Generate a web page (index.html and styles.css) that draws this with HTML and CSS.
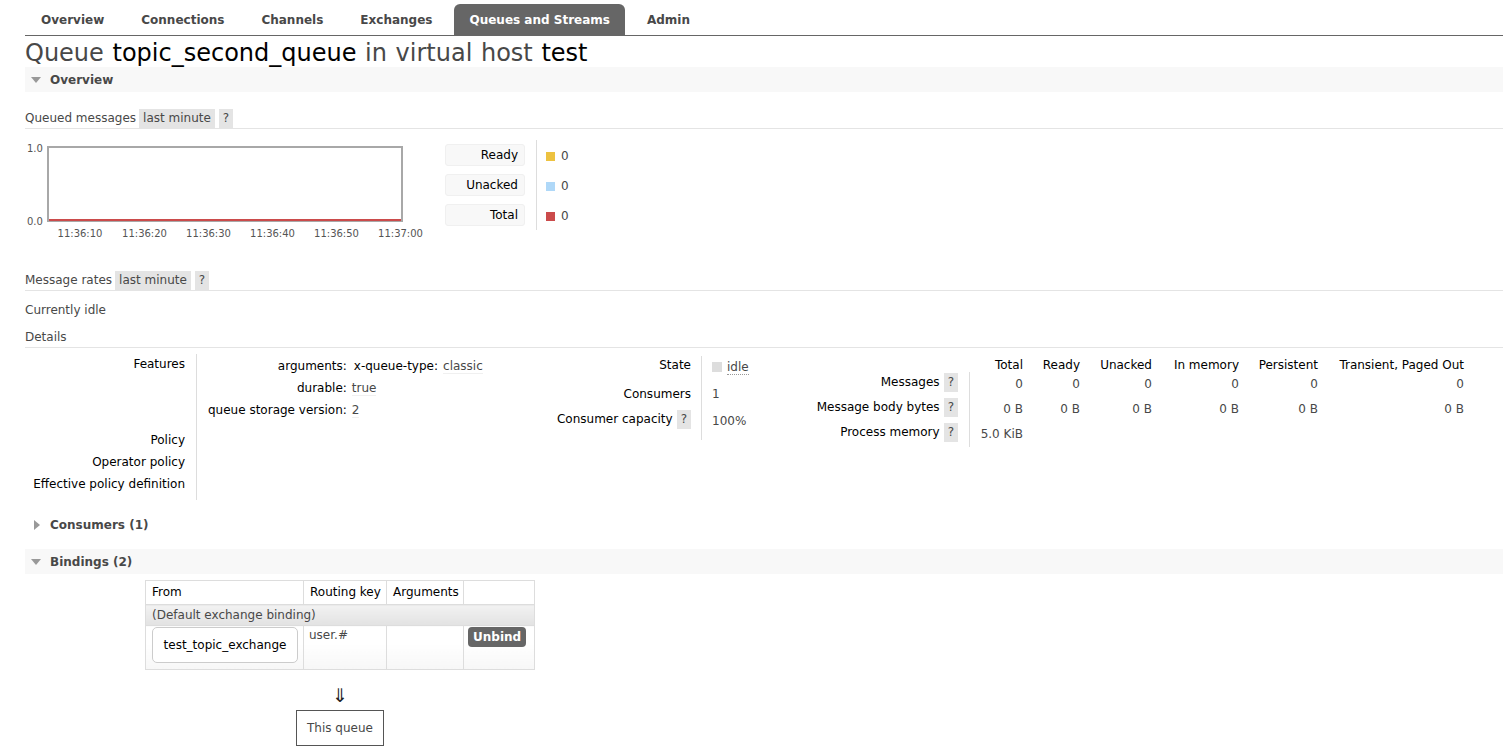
FILE: index.html
```html
<!DOCTYPE html>
<html>
<head>
    <title>RabbitMQ Management</title>
    <link rel="stylesheet" href="styles.css">
</head>
<body>
<div id="menu">
    <ul class="tabs">
        <li><a href="#">Overview</a></li>
        <li><a href="#">Connections</a></li>
        <li><a href="#">Channels</a></li>
        <li><a href="#">Exchanges</a></li>
        <li class="selected"><a href="#">Queues and Streams</a></li>
        <li><a href="#">Admin</a></li>
    </ul>
</div>

<div id="main">
    <h1>Queue <b>topic_second_queue</b> in virtual host <b>test</b></h1>

    <div class="section">
        <h2 class="section-title open"><span class="arrow"></span>Overview</h2>
        <div class="hider">
            <h3 class="rate-head">Queued messages <span class="popup-options">last minute</span><span class="help">?</span></h3>
            <div class="box">
                <svg class="chart" width="400" height="100" viewBox="0 0 400 100">
                    <rect x="23" y="7" width="354" height="74" fill="#fff" stroke="#a8a8a8" stroke-width="2"/>
                    <line x1="24" y1="80" x2="376" y2="80" stroke="#cb4b4b" stroke-width="2"/>
                    <text x="2" y="12">1.0</text>
                    <text x="2" y="85">0.0</text>
                    <g text-anchor="middle">
                        <text x="55" y="97">11:36:10</text>
                        <text x="119.5" y="97">11:36:20</text>
                        <text x="183.5" y="97">11:36:30</text>
                        <text x="247.5" y="97">11:36:40</text>
                        <text x="311.5" y="97">11:36:50</text>
                        <text x="375.5" y="97">11:37:00</text>
                    </g>
                </svg>
                <div class="legend">
                    <div class="legend-labels">
                        <span>Ready</span>
                        <span>Unacked</span>
                        <span>Total</span>
                    </div>
                    <div class="legend-values">
                        <span><i class="swatch ready"></i>0</span>
                        <span><i class="swatch unacked"></i>0</span>
                        <span><i class="swatch total"></i>0</span>
                    </div>
                </div>
            </div>

            <h3 class="rate-head rates">Message rates <span class="popup-options">last minute</span><span class="help">?</span></h3>
            <p class="idle">Currently idle</p>

            <h3>Details</h3>
            <div class="details">
                <table class="facts facts-features">
                    <tr>
                        <th>Features</th>
                        <td class="feat">
                            <table class="mini">
                                <tr>
                                    <th>arguments:</th>
                                    <td>
                                        <table class="mini args">
                                            <tr><th>x-queue-type:</th><td><abbr>classic</abbr></td></tr>
                                        </table>
                                    </td>
                                </tr>
                                <tr><th>durable:</th><td><abbr>true</abbr></td></tr>
                                <tr><th>queue storage version:</th><td><abbr>2</abbr></td></tr>
                            </table>
                        </td>
                    </tr>
                    <tr><th>Policy</th><td></td></tr>
                    <tr><th>Operator policy</th><td></td></tr>
                    <tr class="last"><th>Effective policy definition</th><td></td></tr>
                </table>

                <table class="facts facts-state">
                    <tr class="state">
                        <th>State</th>
                        <td><i class="state-box"></i><abbr class="state-idle">idle</abbr></td>
                    </tr>
                    <tr class="consumers">
                        <th>Consumers</th>
                        <td>1</td>
                    </tr>
                    <tr class="capacity">
                        <th><span class="with-help">Consumer capacity <span class="help">?</span></span></th>
                        <td>100%</td>
                    </tr>
                </table>

                <table class="facts facts-msgs">
                    <tr class="head">
                        <th></th>
                        <td class="c1">Total</td>
                        <td class="c2">Ready</td>
                        <td class="c3">Unacked</td>
                        <td class="c4">In memory</td>
                        <td class="c5">Persistent</td>
                        <td class="c6">Transient, Paged Out</td>
                    </tr>
                    <tr>
                        <th><span class="with-help">Messages <span class="help">?</span></span></th>
                        <td class="c1">0</td>
                        <td>0</td>
                        <td>0</td>
                        <td>0</td>
                        <td>0</td>
                        <td>0</td>
                    </tr>
                    <tr>
                        <th><span class="with-help">Message body bytes <span class="help">?</span></span></th>
                        <td class="c1">0 B</td>
                        <td>0 B</td>
                        <td>0 B</td>
                        <td>0 B</td>
                        <td>0 B</td>
                        <td>0 B</td>
                    </tr>
                    <tr>
                        <th><span class="with-help">Process memory <span class="help">?</span></span></th>
                        <td class="c1">5.0 KiB</td>
                        <td></td>
                        <td></td>
                        <td></td>
                        <td></td>
                        <td></td>
                    </tr>
                </table>
            </div>
        </div>
    </div>

    <div class="section">
        <h2 class="section-title closed"><span class="arrow"></span>Consumers (1)</h2>
    </div>

    <div class="section">
        <h2 class="section-title open"><span class="arrow"></span>Bindings (2)</h2>
        <div class="bindings-wrapper">
            <table class="list">
                <colgroup>
                    <col class="col-from">
                    <col class="col-key">
                    <col class="col-args">
                    <col class="col-act">
                </colgroup>
                <tr>
                    <th>From</th>
                    <th>Routing key</th>
                    <th>Arguments</th>
                    <th></th>
                </tr>
                <tr class="default-binding">
                    <td colspan="4">(Default exchange binding)</td>
                </tr>
                <tr class="alt1">
                    <td><span class="exchange">test_topic_exchange</span></td>
                    <td class="key">user.#</td>
                    <td></td>
                    <td><button class="unbind">Unbind</button></td>
                </tr>
            </table>
            <p class="arrow-down">&#8659;</p>
            <div class="this-queue">This queue</div>
        </div>
    </div>
</div>
</body>
</html>
```

FILE: styles.css
```css
body {
    font: 12px "DejaVu Sans", Verdana, sans-serif;
    color: #484848;
    background-color: #ffffff;
    margin: 0;
    padding: 0;
}

/* top navigation */
#menu {
    padding: 4px 0 0 25px;
}

.tabs {
    list-style: none;
    margin: 0;
    padding: 0 0 0 1px;
    display: flex;
    gap: 7px;
    border-bottom: 1px solid #666;
}

.tabs a {
    display: block;
    padding: 2px 15px 0;
    line-height: 29px;
    font-weight: bold;
    color: #484848;
    text-decoration: none;
    border-radius: 6px 6px 0 0;
}

.tabs .selected a {
    background-color: #666;
    color: #fff;
}

#main {
    padding-left: 25px;
}

h1 {
    font-size: 24px;
    font-weight: normal;
    line-height: 27px;
    margin: 4px 0 0;
    color: #484848;
    word-spacing: 1px;
}

h1 b {
    font-weight: normal;
    color: #000;
}

/* collapsible sections */
.section-title {
    margin: 0;
    height: 25px;
    font-size: 12px;
    font-weight: bold;
    display: flex;
    align-items: center;
}

.section-title.open {
    background-color: #f8f8f8;
}

.section-title.open .arrow {
    border-left: 5px solid transparent;
    border-right: 5px solid transparent;
    border-top: 6px solid #999;
    margin: 0 9px 0 6px;
}

.section-title.closed .arrow {
    border-top: 5px solid transparent;
    border-bottom: 5px solid transparent;
    border-left: 6px solid #999;
    margin: 0 10px 0 9px;
}

.section + .section {
    margin-top: 12px;
}

.hider {
    padding-top: 17px;
}

h3 {
    margin: 0;
    font-size: 12px;
    font-weight: normal;
    line-height: 19px;
    border-bottom: 1px solid #e4e4e4;
    display: flex;
}

.popup-options {
    background-color: #e4e4e4;
    padding: 0 4px;
    margin-left: 3px;
}

.help {
    display: inline-block;
    background-color: #e4e4e4;
    padding: 0 4px;
    line-height: 19px;
    color: #484848;
}

h3 .help {
    margin-left: 4px;
}

/* queued messages chart */
.box {
    display: flex;
    margin-top: 11px;
    height: 100px;
}

.chart text {
    font-family: "DejaVu Sans", Verdana, sans-serif;
    font-size: 10px;
    fill: #545454;
}

.legend {
    display: flex;
    margin-left: 20px;
    height: 90px;
}

.legend-labels {
    display: flex;
    flex-direction: column;
    gap: 8px;
    padding: 4px 0;
    width: 80px;
    margin-right: 11px;
}

.legend-labels span {
    height: 22px;
    line-height: 21px;
    box-sizing: border-box;
    border: 1px solid #f0f0f0;
    border-radius: 3px;
    background-color: #f8f8f8;
    text-align: right;
    padding-right: 6px;
    color: #000;
}

.legend-values {
    border-left: 1px solid #ddd;
    padding: 4px 0 4px 9px;
    display: flex;
    flex-direction: column;
    gap: 8px;
}

.legend-values span {
    height: 22px;
    display: flex;
    align-items: center;
    gap: 6px;
    padding-top: 2px;
    box-sizing: border-box;
}

.swatch {
    width: 9px;
    height: 9px;
    display: inline-block;
}

.ready { background-color: #edc240; }
.unacked { background-color: #afd8f8; }
.total { background-color: #cb4b4b; }

.rates {
    margin-top: 31px;
}

.idle {
    margin: 12px 0 10px;
    line-height: 15px;
}

/* details tables */
.details {
    display: flex;
    align-items: flex-start;
    margin-top: 6px;
}

.facts {
    border-collapse: separate;
    border-spacing: 0;
    flex: none;
}

.facts th {
    text-align: right;
    font-weight: normal;
    color: #000;
    vertical-align: top;
    white-space: nowrap;
    line-height: 15px;
    padding: 3px 11px 4px 0;
}

.facts td {
    vertical-align: top;
    line-height: 15px;
    padding: 3px 0 4px 11px;
    border-left: 1px solid #ddd;
    white-space: nowrap;
}

.facts-features {
    width: 475px;
}

.facts-features > tbody > tr > th {
    width: 160px;
}

.facts-features td.feat {
    padding: 2px 0 8px 11px;
}

.facts-features .last th,
.facts-features .last td {
    padding-bottom: 8px;
}

.mini {
    border-collapse: collapse;
    border-spacing: 0;
}

.facts .mini th {
    padding: 3px 0 4px 0;
}

.facts .mini td {
    padding: 3px 0 4px 5px;
    border-left: none;
}

.facts .mini.args th {
    padding: 0 0 0 2px;
}

.facts .mini.args td {
    padding: 0 0 0 5px;
}

abbr {
    text-decoration: none;
    border-bottom: 1px solid #f0f0f0;
}

.facts-state {
    width: 270px;
    margin-top: 2px;
}

.facts-state th {
    width: 191px;
    padding-right: 10px;
}

.facts-state td {
    padding-left: 10px;
}

.facts-state .state th { padding: 2px 10px 8px 0; }
.facts-state .state td { padding: 4px 0 6px 10px; }
.facts-state .consumers th,
.facts-state .consumers td { padding-top: 6px; padding-bottom: 4px; }
.facts-state .capacity th { padding: 4px 10px 11px 0; }
.facts-state .capacity td { padding: 8px 0 11px 10px; }

.state-box {
    display: inline-block;
    width: 10px;
    height: 10px;
    background-color: #ddd;
    margin-right: 5px;
    vertical-align: -1px;
}

.state-idle {
    border-bottom: 1px dotted #999;
}

.with-help {
    display: inline-flex;
    align-items: center;
    gap: 4px;
}

.facts-msgs {
    margin-top: 1px;
}

.facts-msgs th {
    width: 188px;
    padding: 1px 11px 5px 0;
}

.facts-msgs td {
    text-align: right;
    padding: 5px 0 5px 0;
    border-left: none;
}

.facts-msgs td.c1 {
    border-left: 1px solid #ddd;
    padding-left: 10px;
    width: 43px;
}

.facts-msgs .head th,
.facts-msgs .head td {
    border: none;
    padding: 3px 0 0 0;
    line-height: 14px;
    color: #000;
}

.facts-msgs .head td.c1 { padding-left: 11px; }
.facts-msgs .c2 { width: 57px; }
.facts-msgs .c3 { width: 72px; }
.facts-msgs .c4 { width: 87px; }
.facts-msgs .c5 { width: 79px; }
.facts-msgs .c6 { width: 146px; }

/* bindings */
.bindings-wrapper {
    display: inline-flex;
    flex-direction: column;
    align-items: center;
    margin: 6px 0 0 120px;
}

.list {
    border-collapse: collapse;
    table-layout: fixed;
    width: 389px;
    border: 1px solid #ccc;
}

.col-from { width: 158px; }
.col-key { width: 83px; }
.col-args { width: 77px; }
.col-act { width: 71px; }

.list th,
.list td {
    border: 1px solid #ddd;
    text-align: left;
    vertical-align: top;
    white-space: nowrap;
}

.list th {
    font-weight: normal;
    color: #000;
    line-height: 23px;
    padding: 0 6px;
}

.list .default-binding td {
    line-height: 20px;
    padding: 0 6px;
    background: linear-gradient(#f2f2f2, #e2e2e2);
}

.list .alt1 td {
    height: 44px;
    box-sizing: border-box;
    padding: 2px 5px;
    line-height: 15px;
    background: linear-gradient(#fff 40%, #f7f7f7);
}

.list .alt1 td:first-child {
    padding: 1px 5px 5px 6px;
}

.list .alt1 td:last-child {
    padding: 1px 4px;
}

.exchange {
    display: block;
    height: 36px;
    line-height: 34px;
    box-sizing: border-box;
    border: 1px solid #ccc;
    border-radius: 5px;
    background-color: #fff;
    text-align: center;
    color: #000;
}

.unbind {
    font: bold 12px "DejaVu Sans", Verdana, sans-serif;
    background-color: #666;
    color: #fff;
    border: none;
    border-radius: 4px;
    height: 20px;
    line-height: 20px;
    padding: 0 5px;
    cursor: pointer;
}

.arrow-down {
    margin: 14px 0 0;
    font-size: 19px;
    line-height: 22px;
    color: #222;
}

.this-queue {
    margin-top: 4px;
    height: 36px;
    line-height: 34px;
    box-sizing: border-box;
    border: 1px solid #555;
    padding: 0 10px;
}
```
